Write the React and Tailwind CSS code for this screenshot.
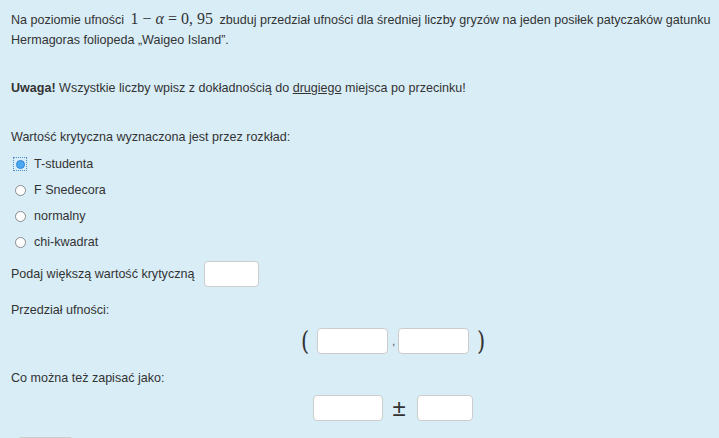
import React from "react";

const options = ["T-studenta", "F Snedecora", "normalny", "chi-kwadrat"];

function Box({ w = "w-[71px]" }) {
  return <div className={`${w} h-[26px] bg-white border border-[#cccccc] rounded-[4px]`} />;
}

function Radio({ checked }) {
  if (checked) {
    return (
      <span className="w-[12px] h-[12px] flex items-center justify-center outline-1 outline-dotted outline-[#4a8fd0]">
        <span className="w-[9px] h-[9px] rounded-full bg-[#4aa8f0] border border-[#2f86d6]" />
      </span>
    );
  }
  return <span className="w-[11px] h-[11px] rounded-full bg-white border border-[#8a8a8a]" />;
}

export default function App() {
  return (
    <div className="min-h-screen bg-[#d9edf7] text-[#333333] font-['Liberation_Sans',Arial,sans-serif] text-[12.55px] leading-[20px] pl-[11px] pr-[4px] pt-[10px] overflow-hidden">
      <p>
        Na poziomie ufności{" "}
        <span className="font-['Liberation_Serif',serif] text-[16px] leading-none mx-[3px]">
          1 − <i>α</i> = 0,&nbsp;95
        </span>{" "}
        zbuduj przedział ufności dla średniej liczby gryzów na jeden posiłek patyczaków gatunku Hermagoras foliopeda „Waigeo Island”.
      </p>

      <p className="mt-[28px]">
        <b>Uwaga!</b> Wszystkie liczby wpisz z dokładnością do <u>drugiego</u> miejsca po przecinku!
      </p>

      <p className="mt-[29px]">Wartość krytyczna wyznaczona jest przez rozkład:</p>

      <div className="mt-[4px] flex flex-col">
        {options.map((o, i) => (
          <div key={o} className="h-[26px] flex items-center">
            <span className="w-[18px] mr-[5px] flex justify-center">
              <Radio checked={i === 0} />
            </span>
            {o}
          </div>
        ))}
      </div>

      <div className="mt-[6px] flex items-center gap-[10px]">
        <span>Podaj większą wartość krytyczną</span>
        <Box w="w-[55px]" />
      </div>

      <p className="mt-[13px]">Przedział ufności:</p>

      <div className="mt-[8px] ml-[290px] flex items-center">
        <span className="font-['DejaVu_Serif',serif] font-extralight text-[21px] leading-[26px] mr-[8px] scale-y-125">(</span>
        <Box />
        <span className="ml-[4px] mr-[3px] text-[10px] self-end mb-[2px]">,</span>
        <Box />
        <span className="font-['DejaVu_Serif',serif] font-extralight text-[21px] leading-[26px] ml-[8px] scale-y-125">)</span>
      </div>

      <p className="mt-[14px]">Co można też zapisać jako:</p>

      <div className="mt-[7px] ml-[302px] flex items-center">
        <Box w="w-[70px]" />
        <span className="ml-[9px] mr-[11px] text-[24px] leading-[20px] w-[14px] flex justify-center">±</span>
        <Box w="w-[56px]" />
      </div>

      <div className="mt-[16px] ml-[6px] w-[57px] h-[30px] bg-white border border-[#cccccc] rounded-[4px]" />
    </div>
  );
}
